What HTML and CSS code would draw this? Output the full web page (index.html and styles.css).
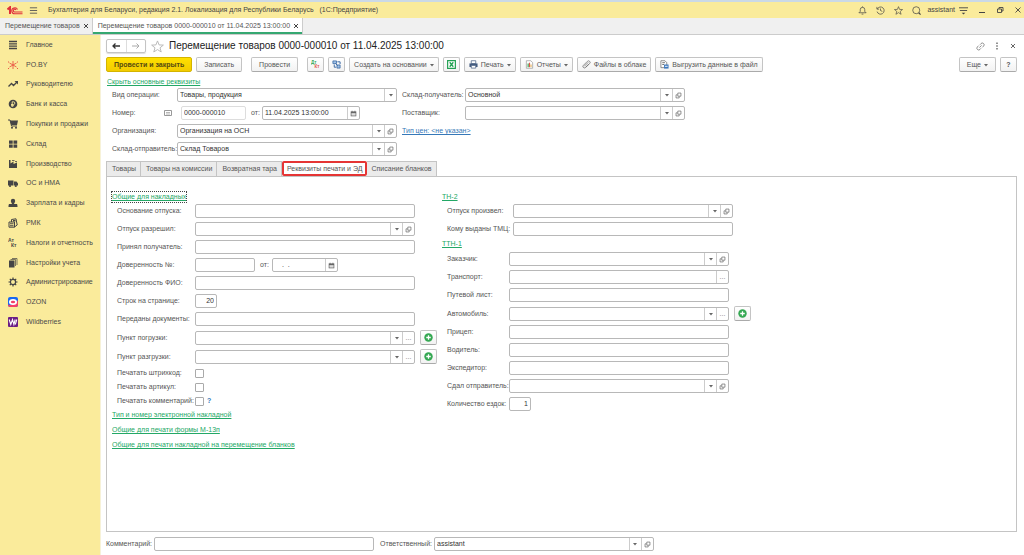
FILE: index.html
```html
<!DOCTYPE html>
<html lang="ru">
<head>
    <meta charset="UTF-8">
    <meta name="viewport" content="width=device-width, initial-scale=1.0">
    <title>Перемещение товаров</title>
    <link rel="stylesheet" href="styles.css">
</head>
<body>
    <!-- Shared icons -->
    <svg class="sprite" width="0" height="0">
        <symbol id="arrow" viewBox="0 0 4 4"><path d="M0 1h4L2 3.500z" fill="#666"/></symbol>
        <symbol id="open" viewBox="0 0 10 10"><path d="M4 1.500h4.500V6H4zM3.500 4H1.500v4.500H6V6.500" fill="none" stroke="#666" stroke-width="1"/></symbol>
        <symbol id="calendar" viewBox="0 0 10 10"><path d="M1 2h8v7H1z" fill="#666"/><path d="M2 4.500h6V8H2z" fill="#ddd"/><path d="M3 1v2M7 1v2" stroke="#666"/></symbol>
        <symbol id="plus" viewBox="0 0 10 10"><circle cx="5" cy="5" r="4.700" fill="#35a853"/><path d="M5 2.500v5M2.500 5h5" stroke="#fff" stroke-width="1.400"/></symbol>
        <symbol id="star" viewBox="0 0 14 14"><path d="M7 1l1.700 4.300 4.600.2-3.600 2.900 1.300 4.500L7 10.300 3 12.900l1.300-4.500L.7 5.500l4.600-.2z" fill="none" stroke="currentColor"/></symbol>
    </svg>

    <header class="titlebar">
        <svg class="logo" viewBox="0 0 32 18">
            <path d="M1 7l5-4.500V16" fill="none" stroke="#e0303a" stroke-width="4"/>
            <path d="M21 7a6 6 0 1 0-5 8.500h15M18 8a2.800 2.800 0 1 0-2 4h15" fill="none" stroke="#e0303a" stroke-width="2.200"/>
        </svg>
        <svg class="icon-m burger" viewBox="0 0 10 10"><path d="M1 2h8M1 5h8M1 8h8" stroke="#555"/></svg>
        <span class="app-name">Бухгалтерия для Беларуси, редакция 2.1. Локализация для Республики Беларусь &nbsp; (1С:Предприятие)</span>
        <div class="titlebar-tools">
            <svg class="icon-m" viewBox="0 0 10 10"><path d="M1 7.500h8L7.500 6V4a2.500 2.500 0 0 0-5 0v2zM4 9h2M5 .5v1" fill="none" stroke="#444" stroke-width=".8"/></svg>
            <svg class="icon-m" viewBox="0 0 10 10"><path d="M1.500 3.200a4 4 0 1 1-.3 3M1 1v2.500h2.500M5 2.800V5l2 1" fill="none" stroke="#444" stroke-width=".8"/></svg>
            <svg class="icon-m"><use href="#star"/></svg>
            <svg class="icon-m" viewBox="0 0 10 10"><circle cx="4.700" cy="4.700" r="3.900" fill="none" stroke="#444" stroke-width=".8"/><path d="M7.500 7.500l2 2" stroke="#444" stroke-width="1.300"/></svg>
        </div>
        <span class="user">assistant</span>
        <div class="window-tools">
            <svg class="icon-m" viewBox="0 0 10 10"><path d="M0 2h10M1 5h8" stroke="#444"/><path d="M3 7.500h4L5 9.500z" fill="#444"/></svg>
            <svg class="icon-s" viewBox="0 0 8 8"><path d="M1 6.500h6" stroke="#444"/></svg>
            <svg class="icon-s" viewBox="0 0 8 8"><path d="M1.500 3h4v3.500h-4zM3 3V1.500h4V5H5.500" fill="none" stroke="#444" stroke-width=".9"/></svg>
            <svg class="icon-s" viewBox="0 0 8 8"><path d="M1.500 1.500l5 5M6.500 1.500l-5 5" stroke="#444" stroke-width=".9"/></svg>
        </div>
    </header>

    <nav class="window-tabs">
        <a class="window-tab" href="#">Перемещение товаров <svg class="cross" viewBox="0 0 6 6"><path d="M1 1l4 4M5 1L1 5" stroke="#444" stroke-width="1"/></svg></a>
        <a class="window-tab current" href="#">Перемещение товаров 0000-000010 от 11.04.2025 13:00:00 <svg class="cross" viewBox="0 0 6 6"><path d="M1 1l4 4M5 1L1 5" stroke="#444" stroke-width="1"/></svg></a>
    </nav>

    <div class="workspace">
        <nav class="sidebar">
            <div class="sections">
                <a href="#"><svg viewBox="0 0 10 10"><path d="M1 1.500h8M1 3.800h8M1 6.200h8M1 8.500h8" stroke="#454545" stroke-width="1.300"/></svg>Главное</a>
                <a href="#"><svg viewBox="0 0 10 10"><path d="M5 5V1M5 5v4M5 5L1.500 3M5 5l3.500 2M5 5L1.500 7M5 5l3.500-2" stroke="#ea5545" stroke-width=".9"/><path d="M.5 1.500v1M9.500 1.500v1M.5 8v1M9.500 8v1" stroke="#ea5545"/></svg>PO.BY</a>
                <a href="#"><svg viewBox="0 0 10 10"><path d="M.5 7.500L3.500 4.500l2 2L9 3" fill="none" stroke="#454545" stroke-width="1.300"/><path d="M6.500 2H10v3.500z" fill="#454545"/></svg>Руководителю</a>
                <a href="#"><svg viewBox="0 0 10 10"><circle cx="5" cy="5" r="4.300" fill="#454545"/><path d="M4.200 8V2.800h1.300a1.300 1.300 0 0 1 0 2.700H3M3 6.700h3" fill="none" stroke="#faeb9b" stroke-width=".9"/></svg>Банк и касса</a>
                <a href="#"><svg viewBox="0 0 10 10"><path d="M2 1.500h8L9 6H3.300z" fill="#454545"/><path d="M0 1h2l1.500 6h5.500" fill="none" stroke="#454545"/><circle cx="4" cy="8.700" r="1" fill="#454545"/><circle cx="8" cy="8.700" r="1" fill="#454545"/></svg>Покупки и продажи</a>
                <a href="#"><svg viewBox="0 0 10 10"><path d="M1 1.500h3.700v3.200H1zM5.500 1.500h3.700v3.200H5.500zM1 5.500h3.700v3.200H1zM5.500 5.500h3.700v3.200H5.500z" fill="#454545"/></svg>Склад</a>
                <a href="#"><svg viewBox="0 0 10 10"><path d="M1 9V1h1.500v3.500l3-2V5l3.500-1.500V9zM4 1.200h2.500V2H4zM7 2.200h2V3H7z" fill="#454545"/></svg>Производство</a>
                <a href="#"><svg viewBox="0 0 10 10"><path d="M0 2.500h5.500v5H0zM6 3.500h2.500L10 5.500v2H6z" fill="#454545"/><circle cx="2" cy="8" r="1.100" fill="#454545"/><circle cx="7.800" cy="8" r="1.100" fill="#454545"/></svg>ОС и НМА</a>
                <a href="#"><svg viewBox="0 0 10 10"><circle cx="5" cy="3" r="2.200" fill="#454545"/><path d="M3.800 4h2.400v2H9c.3.500.5 1.500.5 3h-9c0-1.500.2-2.500.5-3h2.800z" fill="#454545"/></svg>Зарплата и кадры</a>
                <a href="#"><svg viewBox="0 0 10 10"><path d="M1 4h5.500v5.200H1zM3.500 4V1.500L8 .8 9.200 7 6.500 9" fill="none" stroke="#454545"/><path d="M2 5.200h3.500v1H2zM2 7.200h3.500v1H2zM5 2h2.500v1.500H5z" fill="#454545"/></svg>РМК</a>
                <a href="#"><svg viewBox="0 0 10 10"><text class="glyph-5" x="0" y="4">Ат</text><text class="glyph-5" x="3" y="9">Кт</text></svg>Налоги и отчетность</a>
                <a href="#"><svg viewBox="0 0 10 10"><path d="M1 2.500h5.500v7H1z" fill="#454545"/><path d="M2.500 1.500h5v6.500M4 .5h5V7" fill="none" stroke="#454545" stroke-width=".7"/></svg>Настройки учета</a>
                <a href="#"><svg viewBox="0 0 10 10"><circle cx="5" cy="5" r="2.600" fill="none" stroke="#454545" stroke-width="1.200"/><path d="M5 .5v1.600M5 7.900v1.600M.5 5h1.600M7.900 5h1.600M1.800 1.800L3 3M7 7l1.200 1.200M1.800 8.200L3 7M7 3l1.200-1.200" stroke="#454545" stroke-width="1.200"/></svg>Администрирование</a>
                <a href="#"><svg viewBox="0 0 10 10"><rect width="10" height="10" rx="2" fill="#1867f2"/><path d="M0 7.500C3 9 8 6 10 3v5a2 2 0 0 1-2 2H2a2 2 0 0 1-2-2z" fill="#f43f68"/><ellipse cx="5" cy="5" rx="4" ry="2.900" fill="#fff"/><ellipse cx="5" cy="5" rx="2.200" ry="1.200" fill="#f43f68"/></svg>OZON</a>
                <a href="#"><svg viewBox="0 0 10 10"><rect width="10" height="10" rx="1" fill="#6b1f86"/><path d="M1.200 2.500l1.600 5 1.700-5 1.400 5 1.300-5M8.800 2.500L7.300 7.500" fill="none" stroke="#fff" stroke-width="1.100"/></svg>Wildberries</a>
            </div>
        </nav>

        <main class="document">
            <div class="heading">
                <div class="history">
                    <button type="button" aria-label="Назад"><svg class="icon-s" viewBox="0 0 8 8"><path d="M8 4H1.500M3.500 1.500L1 4l2.500 2.500" fill="none" stroke="#333" stroke-width="1.300"/></svg></button>
                    <button type="button" aria-label="Вперед"><svg class="icon-s" viewBox="0 0 8 8"><path d="M0 4h6.500M4.500 1.500L7 4 4.500 6.500" fill="none" stroke="#aaa"/></svg></button>
                </div>
                <svg class="favorite"><use href="#star"/></svg>
                <h1>Перемещение товаров 0000-000010 от 11.04.2025 13:00:00</h1>
                <div class="heading-tools">
                    <svg class="icon-m" viewBox="0 0 10 10"><path d="M4.500 3l1-1.200a2 2 0 0 1 3 2.700L7 6M5.500 7l-1 1.200a2 2 0 0 1-3-2.700L3 4M3.800 6.200l2.400-2.400" fill="none" stroke="#777" stroke-width=".9"/></svg>
                    <svg class="icon-s" viewBox="0 0 8 8"><path d="M3.300.5h1.400v1.400H3.300zM3.300 3.300h1.400v1.400H3.300zM3.300 6.100h1.400v1.400H3.300z" fill="#666"/></svg>
                    <svg class="icon-s" viewBox="0 0 8 8"><path d="M2 2l4 4M6 2L2 6" stroke="#666"/></svg>
                </div>
            </div>

            <div class="toolbar">
                <button class="btn text primary" type="button">Провести и закрыть</button>
                <button class="btn text spaced" type="button">Записать</button>
                <button class="btn text spaced" type="button">Провести</button>
                <button class="btn square" type="button" aria-label="Дт Кт"><svg class="icon-m" viewBox="0 0 10 10"><text class="glyph-5 green" x="0" y="4">Дт</text><text class="glyph-5 red" x="4" y="9">Кт</text></svg></button>
                <button class="btn square" type="button" aria-label="Структура"><svg class="icon-m" viewBox="0 0 10 10"><path d="M1 1h4v3H1zM5.500 5.500h3.500v3.500H5.500z" fill="#9fc0e6" stroke="#2c5f9e" stroke-width=".8"/><path d="M6 2h3v2.500M2.500 5v3H4.500M4 4l2 2" fill="none" stroke="#2c5f9e"/></svg></button>
                <button class="btn" type="button">Создать на основании <svg class="caret"><use href="#arrow"/></svg></button>
                <button class="btn square" type="button" aria-label="Excel"><svg class="icon-m" viewBox="0 0 10 10"><path d="M.7.700h8.600v8.600H.7z" fill="#fff" stroke="#22a052" stroke-width="1.300"/><path d="M3 2.500l4 5M7 2.500l-4 5" stroke="#22a052" stroke-width="1.400"/></svg></button>
                <button class="btn" type="button"><svg class="icon-m" viewBox="0 0 10 10"><path d="M2.500.8h5V4h-5z" fill="#fff" stroke="#445c80" stroke-width=".8"/><path d="M.5 3.800h9v4h-9z" fill="#445c80"/><path d="M2.500 6h5v3h-5z" fill="#fff" stroke="#445c80" stroke-width=".8"/></svg>Печать <svg class="caret"><use href="#arrow"/></svg></button>
                <button class="btn" type="button"><svg class="icon-m" viewBox="0 0 10 10"><path d="M1.500.8h5L8.500 3v6.200h-7z" fill="#fff" stroke="#999" stroke-width=".8"/><path d="M3.500 4v4" stroke="#35a853" stroke-width="1.300"/><path d="M5 3v5" stroke="#e2564a" stroke-width="1.300"/><path d="M6.700 5v3" stroke="#e0a030"/></svg>Отчеты <svg class="caret"><use href="#arrow"/></svg></button>
                <button class="btn" type="button"><svg class="icon-m" viewBox="0 0 10 10"><path d="M2.500 7L7 2.500M4 8.300L8.500 4a1.700 1.700 0 0 0-2.500-2.500L1.500 6a1.500 1.500 0 0 0 2.300 2.300L7.500 4.500" fill="none" stroke="#666" stroke-width=".8"/></svg>Файлы в облаке</button>
                <button class="btn" type="button"><svg class="icon-m" viewBox="0 0 10 10"><path d="M1 .8h4.500L7.500 3v5.500H1z" fill="#fff" stroke="#666" stroke-width=".8"/><path d="M2.500 3h3M2.500 5h2" stroke="#666"/><path d="M4.500 5h5v4.500h-5z" fill="#3d78bd"/><path d="M5.500 7h3" stroke="#fff"/></svg>Выгрузить данные в файл</button>
                <button class="btn text more" type="button">Еще <svg class="caret"><use href="#arrow"/></svg></button>
                <button class="btn square help" type="button">?</button>
            </div>

            <a class="link toggle" href="#">Скрыть основные реквизиты</a>

            <div class="requisites">
                <div class="rows">
                    <div class="row">
                        <label for="operation">Вид операции:</label>
                        <div class="field"><select id="operation"><option>Товары, продукция</option></select><span class="field-btn"><svg class="caret"><use href="#arrow"/></svg></span></div>
                    </div>
                    <div class="row number-row">
                        <label for="number">Номер:<svg class="keyboard" viewBox="0 0 8 6"><path d="M.5.5h7v5h-7z" fill="#fff" stroke="#999"/><path d="M2 2.500h4M2 4h4" stroke="#999" stroke-width=".7"/></svg></label>
                        <div class="field number"><input id="number" type="text" value="0000-000010"></div>
                        <label class="from" for="date">от:</label>
                        <div class="field date-time"><input id="date" type="text" value="11.04.2025 13:00:00"><button type="button" aria-label="Календарь"><svg class="mark"><use href="#calendar"/></svg></button></div>
                    </div>
                    <div class="row">
                        <label for="company">Организация:</label>
                        <div class="field"><input id="company" type="text" value="Организация на ОСН"><button type="button" aria-label="Выбрать"><svg class="caret"><use href="#arrow"/></svg></button><button type="button" aria-label="Открыть"><svg class="mark"><use href="#open"/></svg></button></div>
                    </div>
                    <div class="row">
                        <label for="sender">Склад-отправитель:</label>
                        <div class="field"><input id="sender" type="text" value="Склад Товаров"><button type="button" aria-label="Выбрать"><svg class="caret"><use href="#arrow"/></svg></button><button type="button" aria-label="Открыть"><svg class="mark"><use href="#open"/></svg></button></div>
                    </div>
                </div>
                <div class="rows receiver">
                    <div class="row">
                        <label for="receiver">Склад-получатель:</label>
                        <div class="field"><input id="receiver" type="text" value="Основной"><button type="button" aria-label="Выбрать"><svg class="caret"><use href="#arrow"/></svg></button><button type="button" aria-label="Открыть"><svg class="mark"><use href="#open"/></svg></button></div>
                    </div>
                    <div class="row">
                        <label for="supplier">Поставщик:</label>
                        <div class="field"><input id="supplier" type="text"><button type="button" aria-label="Выбрать"><svg class="caret"><use href="#arrow"/></svg></button><button type="button" aria-label="Открыть"><svg class="mark"><use href="#open"/></svg></button></div>
                    </div>
                    <div class="row"><a class="link blue" href="#">Тип цен: &lt;не указан&gt;</a></div>
                </div>
            </div>

            <div class="tabs" role="tablist">
                <button type="button" role="tab">Товары</button>
                <button type="button" role="tab">Товары на комиссии</button>
                <button type="button" role="tab">Возвратная тара</button>
                <button class="selected" type="button" role="tab" aria-selected="true">Реквизиты печати и ЭД</button>
                <button type="button" role="tab">Списание бланков</button>
            </div>

            <div class="panel">
                <section class="common">
                    <a class="link focused" href="#">Общие для накладных</a>
                    <div class="rows">
                        <div class="row"><label for="basis">Основание отпуска:</label><div class="field"><input id="basis" type="text"></div></div>
                        <div class="row"><label for="allowed">Отпуск разрешил:</label><div class="field"><input id="allowed" type="text"><button type="button" aria-label="Выбрать"><svg class="caret"><use href="#arrow"/></svg></button><button type="button" aria-label="Открыть"><svg class="mark"><use href="#open"/></svg></button></div></div>
                        <div class="row"><label for="accepted">Принял получатель:</label><div class="field"><input id="accepted" type="text"></div></div>
                        <div class="row">
                            <label for="proxy">Доверенность №:</label>
                            <div class="field proxy"><input id="proxy" type="text"></div>
                            <label class="from" for="proxy-date">от:</label>
                            <div class="field proxy-date"><input id="proxy-date" type="text" value="  .  ."><button type="button" aria-label="Календарь"><svg class="mark"><use href="#calendar"/></svg></button></div>
                        </div>
                        <div class="row"><label for="proxy-name">Доверенность ФИО:</label><div class="field"><input id="proxy-name" type="text"></div></div>
                        <div class="row"><label for="lines">Строк на странице:</label><div class="field count"><input id="lines" type="text" value="20"></div></div>
                        <div class="row"><label for="papers">Переданы документы:</label><div class="field"><input id="papers" type="text"></div></div>
                        <div class="row"><label for="loading">Пункт погрузки:</label><div class="field"><input id="loading" type="text"><button type="button" aria-label="Выбрать"><svg class="caret"><use href="#arrow"/></svg></button><button type="button">...</button></div><button class="btn add" type="button" aria-label="Добавить"><svg class="icon-m"><use href="#plus"/></svg></button></div>
                        <div class="row"><label for="unloading">Пункт разгрузки:</label><div class="field"><input id="unloading" type="text"><button type="button" aria-label="Выбрать"><svg class="caret"><use href="#arrow"/></svg></button><button type="button">...</button></div><button class="btn add" type="button" aria-label="Добавить"><svg class="icon-m"><use href="#plus"/></svg></button></div>
                        <div class="row check"><label for="barcode">Печатать штрихкод:</label><input id="barcode" type="checkbox"></div>
                        <div class="row check"><label for="article">Печатать артикул:</label><input id="article" type="checkbox"></div>
                        <div class="row check"><label for="remark">Печатать комментарий:</label><input id="remark" type="checkbox"><a class="hint" href="#">?</a></div>
                    </div>
                    <div class="groups">
                        <a class="link" href="#">Тип и номер электронной накладной</a>
                        <a class="link" href="#">Общие для печати формы М-13п</a>
                        <a class="link" href="#">Общие для печати накладной на перемещение бланков</a>
                    </div>
                </section>

                <section class="waybills">
                    <a class="link" href="#">ТН-2</a>
                    <div class="rows tn">
                        <div class="row"><label for="released">Отпуск произвел:</label><div class="field"><input id="released" type="text"><button type="button" aria-label="Выбрать"><svg class="caret"><use href="#arrow"/></svg></button><button type="button" aria-label="Открыть"><svg class="mark"><use href="#open"/></svg></button></div></div>
                        <div class="row"><label for="issued">Кому выданы ТМЦ:</label><div class="field"><input id="issued" type="text"></div></div>
                    </div>
                    <a class="link" href="#">ТТН-1</a>
                    <div class="rows ttn">
                        <div class="row"><label for="customer">Заказчик:</label><div class="field"><input id="customer" type="text"><button type="button" aria-label="Выбрать"><svg class="caret"><use href="#arrow"/></svg></button><button type="button" aria-label="Открыть"><svg class="mark"><use href="#open"/></svg></button></div></div>
                        <div class="row"><label for="transport">Транспорт:</label><div class="field"><input id="transport" type="text"><button type="button">...</button></div></div>
                        <div class="row"><label for="trip">Путевой лист:</label><div class="field"><input id="trip" type="text"></div></div>
                        <div class="row"><label for="car">Автомобиль:</label><div class="field"><input id="car" type="text"><button type="button" aria-label="Выбрать"><svg class="caret"><use href="#arrow"/></svg></button><button type="button">...</button></div><button class="btn add" type="button" aria-label="Добавить"><svg class="icon-m"><use href="#plus"/></svg></button></div>
                        <div class="row"><label for="trailer">Прицеп:</label><div class="field"><input id="trailer" type="text"></div></div>
                        <div class="row"><label for="driver">Водитель:</label><div class="field"><input id="driver" type="text"></div></div>
                        <div class="row"><label for="forwarder">Экспедитор:</label><div class="field"><input id="forwarder" type="text"></div></div>
                        <div class="row"><label for="handed">Сдал отправитель:</label><div class="field"><input id="handed" type="text"><button type="button" aria-label="Выбрать"><svg class="caret"><use href="#arrow"/></svg></button><button type="button" aria-label="Открыть"><svg class="mark"><use href="#open"/></svg></button></div></div>
                        <div class="row"><label for="trips">Количество ездок:</label><div class="field count"><input id="trips" type="text" value="1"></div></div>
                    </div>
                </section>
            </div>

            <footer class="row bottom">
                <label for="comment">Комментарий:</label>
                <div class="field"><input id="comment" type="text"></div>
                <label for="responsible">Ответственный:</label>
                <div class="field"><input id="responsible" type="text" value="assistant"><button type="button" aria-label="Выбрать"><svg class="caret"><use href="#arrow"/></svg></button><button type="button" aria-label="Открыть"><svg class="mark"><use href="#open"/></svg></button></div>
            </footer>
        </main>
    </div>
</body>
</html>
```

FILE: styles.css
```css
* {
    box-sizing: border-box;
}
body {
    margin: 0;
    min-height: 100vh;
    display: flex;
    flex-direction: column;
    font-family: "Liberation Sans", Arial, sans-serif;
    font-size: 7px;
    line-height: 10px;
    color: #555;
    background: #fff;
}
button, input, select {
    font: inherit;
    color: inherit;
}
button {
    padding: 0;
    cursor: pointer;
}
a {
    color: inherit;
    text-decoration: none;
}
svg {
    flex: none;
}
.sprite {
    position: absolute;
}
.icon-m {
    width: 9px;
    height: 9px;
}
.icon-s {
    width: 8px;
    height: 8px;
}
.caret {
    width: 4px;
    height: 4px;
}
.mark {
    width: 7px;
    height: 7px;
}
.glyph-5 {
    font-size: 5px;
    font-weight: bold;
    fill: #454545;
}
.glyph-5.green {
    fill: #35a853;
}
.glyph-5.red {
    fill: #e2564a;
}

/* Window header */
.titlebar {
    display: flex;
    align-items: center;
    height: 18px;
    padding: 0 2px 0 7px;
    border-top: 2px solid #cbd9e6;
    background: #faeb9b;
    color: #444;
}
.logo {
    width: 16px;
    height: 9px;
}
.burger {
    margin: 0 10px 0 6px;
}
.titlebar-tools {
    display: flex;
    gap: 9px;
    margin-left: auto;
    color: #444;
}
.user {
    margin: 0 4px 0 6px;
}
.window-tools {
    display: flex;
    align-items: center;
    gap: 10px;
}
.window-tabs {
    display: flex;
    height: 17px;
    border-bottom: 1px solid #ccc;
    background: #f0f0f0;
}
.window-tab {
    display: flex;
    align-items: center;
    gap: 3px;
    padding: 0 3px 0 5px;
    border-right: 1px solid #ccc;
}
.window-tab.current {
    background: #fff;
    box-shadow: inset 0 -2px #35a871;
}
.cross {
    width: 6px;
    height: 6px;
}

/* Sections */
.workspace {
    flex: 1;
    display: flex;
}
.sidebar {
    flex: none;
    width: 101px;
    background: #faeb9b;
    border-right: 1px solid #f7f2d8;
    color: #4a4a4a;
}
.sections {
    display: flex;
    flex-direction: column;
    height: 297px;
}
.sections a {
    flex: 1;
    display: flex;
    align-items: center;
    gap: 8px;
    padding-left: 8px;
}
.sections svg {
    width: 10px;
    height: 10px;
}

/* Document form */
.document {
    flex: 1;
    display: flex;
    flex-direction: column;
    padding: 4px 7px 4px 5px;
}
.heading {
    display: flex;
    align-items: center;
    height: 14px;
}
.history {
    display: flex;
    width: 40px;
    height: 14px;
    border: 1px solid #c4c4c4;
    border-radius: 2px;
    box-shadow: 0 1px 1px #ddd;
}
.history button {
    flex: 1;
    display: flex;
    align-items: center;
    justify-content: center;
    border: 0;
    background: none;
}
.history button + button {
    border-left: 1px solid #ddd;
}
.favorite {
    width: 13px;
    height: 13px;
    margin: 0 5px;
    color: #b5b5b5;
}
h1 {
    margin: 0;
    font-size: 10px;
    line-height: 14px;
    font-weight: normal;
    color: #222;
}
.heading-tools {
    display: flex;
    gap: 8px;
    align-items: center;
    margin-left: auto;
}
.toolbar {
    display: flex;
    gap: 4px;
    margin-top: 4px;
}
.btn {
    display: flex;
    align-items: center;
    justify-content: center;
    gap: 3px;
    height: 15px;
    padding: 0 4px;
    border: 1px solid #c4c4c4;
    border-bottom-color: #aaa;
    border-radius: 2px;
    background: linear-gradient(#fff, #f2f2f2);
    white-space: nowrap;
}
.btn.text {
    padding: 0 7px;
}
.btn.primary {
    border-color: #d4b400;
    background: linear-gradient(#ffe000, #f2cb00);
    font-weight: bold;
    color: #564a10;
}
.btn.spaced {
    margin-right: 5px;
}
.btn.square {
    width: 17px;
    padding: 0;
}
.btn.more {
    margin-left: auto;
}
.btn.help {
    font-weight: bold;
}
.link {
    align-self: flex-start;
    color: #23a866;
    text-decoration: underline;
}
.link.blue {
    align-self: center;
    color: #3678b8;
}
.toggle {
    margin: 5px 0 1px 1px;
}

/* Fields */
.rows {
    display: flex;
    flex-direction: column;
    gap: 4px;
}
.row {
    display: flex;
    align-items: center;
    min-height: 14px;
}
.row label {
    flex: none;
    white-space: nowrap;
}
.field {
    display: flex;
    width: 220px;
    height: 14px;
    border: 1px solid #b8b8b8;
    border-radius: 2px;
    background: #fff;
    color: #333;
}
.field input,
.field select {
    flex: 1;
    min-width: 0;
    padding: 0 2px;
    border: 0;
    background: none;
    appearance: none;
    outline: none;
}
.field button,
.field-btn {
    display: flex;
    align-items: center;
    justify-content: center;
    width: 12px;
    border: 0;
    border-left: 1px solid #ccc;
    background: none;
    color: #777;
}
.requisites {
    display: flex;
    gap: 5px;
    padding-left: 6px;
}
.requisites label {
    width: 65px;
}
.requisites .receiver label {
    width: 63px;
}
.number-row label {
    display: flex;
    align-items: center;
    justify-content: space-between;
}
.number-row label:first-child {
    padding-right: 9px;
    width: 69px;
}
.keyboard {
    width: 8px;
    height: 6px;
}
.field.number {
    width: 65px;
    border-color: #ddd;
}
.row label.from {
    width: auto;
    margin: 0 2px 0 5px;
}
.field.date-time {
    width: 98px;
}

/* Tabs */
.tabs {
    display: flex;
    height: 15px;
    margin-top: 5px;
}
.tabs button {
    padding: 0 4px 0 5px;
    border: 1px solid #c4c4c4;
    border-width: 1px 1px 0 0;
    background: #ebebeb;
}
.tabs button:first-child {
    border-left-width: 1px;
}
.tabs .selected {
    border: 2px solid #e53535;
    border-radius: 2px;
    background: #fff;
    padding: 0 2px 0 3px;
}
.panel {
    flex: 1;
    display: flex;
    gap: 5px;
    padding: 15px 5px;
    border: 1px solid #c4c4c4;
}
.panel section {
    display: flex;
    flex-direction: column;
}
.common {
    width: 325px;
}
.focused {
    outline: 1px dotted #444;
}
.panel .rows {
    padding: 2px 0 0 5px;
}
.common .row label {
    width: 78px;
}
.common .row label.from {
    width: 10px;
    margin: 0 2px 0 5px;
}
.field.proxy {
    width: 60px;
}
.field.proxy-date {
    width: 66px;
}
.field.proxy-date input {
    padding-left: 5px;
    white-space: pre;
}
.field.count {
    width: 22px;
}
.field.count input {
    text-align: right;
}
.btn.add {
    width: 17px;
    padding: 0;
    margin-left: 5px;
}
.row.check {
    min-height: 10px;
}
.check input {
    width: 9px;
    height: 9px;
    margin: 0;
    appearance: none;
    border: 1px solid #aaa;
    border-radius: 1px;
}
.hint {
    margin-left: 3px;
    color: #3678b8;
    font-weight: bold;
}
.groups {
    display: flex;
    flex-direction: column;
    gap: 5px;
    margin-top: 4px;
}
.tn .row label {
    width: 66px;
}
.ttn .row label {
    width: 62px;
}
.waybills .ttn {
    padding-top: 3px;
}
.waybills .tn {
    padding-bottom: 3px;
}
.bottom {
    gap: 2px;
    margin-top: 5px;
}
.bottom .field + label {
    margin-left: 4px;
}
```
